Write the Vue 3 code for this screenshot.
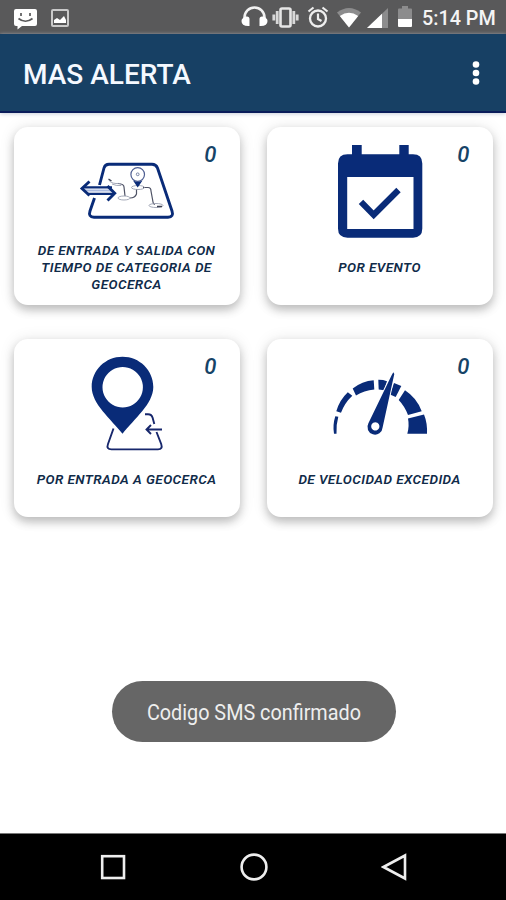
<template>
    <div class="phone">
        <div class="status">
            <div class="status-group">
                <svg class="ic-sms" width="23" height="21" viewBox="0 0 23 21">
                    <path d="M2 0H21Q23 0 23 2V15Q23 17 21 17H8L3.500 20.500V17H2Q0 17 0 15V2Q0 0 2 0Z" fill="#fff"/>
                    <path d="M7 4v3M16 4v3M4.500 9.500Q11.500 15 18.500 9.500" fill="none" stroke="#59595a" stroke-width="1.700"/>
                </svg>
                <svg class="ic-image" width="18" height="18" viewBox="0 0 18 18">
                    <rect x="1" y="1" width="16" height="16" rx="1" fill="none" stroke="#c9c9c9" stroke-width="2"/>
                    <path d="M3 14V11L6 9L9 11L13 7L15 11V14Z" fill="#fff"/>
                </svg>
            </div>
            <div class="status-group">
                <svg class="ic-head" width="27" height="21" viewBox="0 0 27 21">
                    <path d="M3.500 14V11.500A10 10 0 0 1 23.500 11.500V14" fill="none" stroke="#f1f1f1" stroke-width="2.600"/>
                    <path d="M5 10.500Q8.500 10 8.500 13V20Q0.500 20.500 0.500 15Q.5 12 5 10.500ZM22 10.500Q18.500 10 18.500 13V20Q26.500 20.500 26.500 15Q26.500 12 22 10.500Z" fill="#fff"/>
                </svg>
                <svg class="ic-vibrate" width="27" height="21" viewBox="0 0 27 21">
                    <rect x="8.500" y="1.500" width="10" height="18" rx="1.500" fill="none" stroke="#e6e6e6" stroke-width="2.600"/>
                    <path d="M5.200 4V17M21.800 4V17M1.800 7.500V13.500M25.200 7.500V13.500" stroke="#d8d8d8" stroke-width="2.800"/>
                </svg>
                <svg class="ic-alarm" width="22" height="22" viewBox="0 0 22 22">
                    <circle cx="11" cy="12.500" r="8" fill="none" stroke="#eee" stroke-width="2.300"/>
                    <path d="M11 7.500V13L14.500 15M1.500 5.500L6.500 1.500M20.500 5.500L15.500 1.500" fill="none" stroke="#eee" stroke-width="2.200"/>
                </svg>
                <svg class="ic-wifi" width="24" height="20" viewBox="0 0 24 20">
                    <path d="M0 4.500Q12-4.500 24 4.500L12 19.500Z" fill="#8c8c8d"/>
                    <path d="M2.800 8Q12 1.500 21.200 8L12 19.500Z" fill="#fff"/>
                </svg>
                <svg class="ic-signal" width="21" height="20" viewBox="0 0 21 20">
                    <path d="M0 20L21 0V20Z" fill="#8c8c8d"/>
                    <path d="M0 20L15 5.700V20Z" fill="#fff"/>
                </svg>
                <svg class="ic-battery" width="14" height="21" viewBox="0 0 14 21">
                    <path d="M0 3.500Q0 2.500 1 2.500H4V0H10V2.500H13Q14 2.500 14 3.500V13H0Z" fill="#8c8c8d"/>
                    <path d="M0 13H14V20Q14 21 13 21H1Q0 21 0 20Z" fill="#fff"/>
                </svg>
                <span class="clock">5:14 PM</span>
            </div>
        </div>
        <header class="toolbar">
            <h1>MAS ALERTA</h1>
            <svg width="8" height="24" viewBox="0 0 8 24" fill="#fff">
                <circle cx="4" cy="3.500" r="3.300"/>
                <circle cx="4" cy="12" r="3.300"/>
                <circle cx="4" cy="20.500" r="3.300"/>
            </svg>
        </header>
        <main class="content">
            <div class="grid">
                <div class="card" v-for="item in alerts" :key="item.icon">
                    <span class="count">{{ item.count }}</span>
                    <svg class="picture" width="110" height="101" viewBox="0 0 110 101">
                        <g v-if="item.icon === 'fence'" fill="none" stroke="#092b78">
                            <path d="M27.500 45L32 28Q33 24.300 37 24.300H80Q84 24.300 85.500 28L100 71Q102 77 96 77.300H22Q16 77 18 71L22.500 58" stroke-width="2.900"/>
                            <path d="M11 47.400H40M15 53.800H42" stroke-width="2.300"/>
                            <path d="M13 50.500H39" stroke="#a9b8de" stroke-width="2"/>
                            <path d="M17.500 41.500L10 48.500L17.500 55.500M35.500 46L42.700 53.300L35.500 60.500" stroke-width="2.900"/>
                            <path d="M46 43.500Q52 44 52 47L53 56M58 58Q63 58 64.500 54V49M71 47.500H76Q79 47.500 79 51L81 62Q81 64 83 64.500" stroke="#4e5265" stroke-width="1.200"/>
                            <g stroke="#9a9fb0" stroke-width=".9">
                                <path d="M37 40Q38 43 44 43.500Q50 43 49 45.500Q44 46 40 44"/>
                                <ellipse cx="52" cy="58" rx="6" ry="2"/>
                                <ellipse cx="66" cy="47.500" rx="6.500" ry="2"/>
                                <ellipse cx="84" cy="65.500" rx="7" ry="2"/>
                            </g>
                            <path d="M36.500 39L39.500 41M85 66.500H90" stroke="#3c4052" stroke-width="1.300"/>
                            <circle cx="65.700" cy="34.500" r="6.800" fill="#fff" stroke="#4d5d91" stroke-width="1.200"/>
                            <circle cx="65.700" cy="34.300" r="1.400" stroke="#596993" stroke-width=".8"/>
                            <path d="M61 40.500Q65.700 43 70.500 40.500L65.700 47.500Z" fill="#092b78" stroke="none"/>
                        </g>
                        <g v-else-if="item.icon === 'event'" fill="#092b78">
                            <path fill-rule="evenodd" d="M27 5H36.700V14.300H74.300V5H83.700V14.300H88Q97.300 14.300 97.300 23.500V88.500Q97.300 97.700 88 97.700H22.500Q13 97.700 13 88.500V23.500Q13 14.300 22.500 14.300H27ZM22.200 37V89H88.500V37Z"/>
                            <path d="M36 61.800L48.700 74.800L73.500 50" fill="none" stroke="#092b78" stroke-width="6.200"/>
                        </g>
                        <g v-else-if="item.icon === 'entry'">
                            <path d="M73 62.300H76Q79.700 62.300 80.700 66L82.300 72M84.500 80L89.200 92Q91 97.400 86 97.400H39.500Q34 97.400 36 92L41.500 76.500M90 77.500H74.500M79 73L74.500 77.500L79 82" fill="none" stroke="#17276c" stroke-width="1.900"/>
                            <path fill-rule="evenodd" d="M50.500 4.800C33.500 4.800 19.700 18.200 19.700 35C19.700 52 39 67 50.500 81.800C62 67 81.300 52 81.300 35C81.300 18.200 67.500 4.800 50.500 4.800ZM50.700 15A20.200 20.200 0 1 1 50.690 15Z" fill="#092b78"/>
                        </g>
                        <g v-else fill="#092b78">
                            <path v-for="d in gauge" :key="d" :d="d"/>
                            <path fill-rule="evenodd" d="M68.300 20.300L69.300 22L57.600 75.500A7.600 7.600 0 1 1 43.400 71.300L66.500 23.500ZM50.300 70.300A4.100 4.100 0 1 0 50.310 70.300Z" stroke="#fff" stroke-width="2" paint-order="stroke"/>
                        </g>
                    </svg>
                    <p class="label">
                        <span v-for="line in item.lines" :key="line">{{ line }}</span>
                    </p>
                </div>
            </div>
            <div class="toast"><span>Codigo SMS confirmado</span></div>
        </main>
        <nav class="navbar">
            <svg width="28" height="28" viewBox="0 0 28 28"><rect x="3.200" y="3.200" width="21.800" height="21.800"/></svg>
            <svg width="28" height="28" viewBox="0 0 28 28"><circle cx="14" cy="14" r="12.400"/></svg>
            <svg width="28" height="28" viewBox="0 0 28 28"><path d="M2.500 14L24 2.500V25.500Z"/></svg>
        </nav>
    </div>
</template>
<script setup>
    import { ref } from 'vue'
    const alerts = ref([
        { icon: 'fence', count: 0, lines: ['DE ENTRADA Y SALIDA CON', 'TIEMPO DE CATEGORIA DE', 'GEOCERCA'] },
        { icon: 'event', count: 0, lines: ['POR EVENTO'] },
        { icon: 'entry', count: 0, lines: ['POR ENTRADA A GEOCERCA'] },
        { icon: 'speed', count: 0, lines: ['DE VELOCIDAD EXCEDIDA'] }
    ]);
    // dial segments, left to right
    const gauge = [
        'M10.300 64.200L13.300 64.700Q11 73 11.500 81.800H9Q7.500 73 10.300 64.200Z',
        'M11.300 59.200Q14.500 48 22.800 40.200L27.300 43.700Q19.500 51 16 60.800Z',
        'M27.700 36.500Q37 29 48.700 28.200L49.300 37.500Q39 38.500 31 43.500Z',
        'M53.300 27.800Q58 27.700 62 29.200L59 38.200L53.700 37.500Z',
        'M69 31L76.300 34L70.700 45L65 42.500Z',
        'M80 38.200Q92 46 96.700 59.200L83 63Q79.500 54 73.700 48Z',
        'M99 62.500Q102.500 71 102 81.800H82.300Q84.500 74 83 66.500Z'
    ];
</script>
<style>
    body{
        background:#fff;
    }
</style>
<style scoped>
    .phone{
        display:flex;
        flex-direction:column;
        width:506px;
        height:900px;
        overflow:hidden;
        background:#fff;
        font-family:Roboto, "Liberation Sans", sans-serif;
    }
    svg{
        display:block;
        flex:none;
    }
    .status{
        display:flex;
        justify-content:space-between;
        box-sizing:border-box;
        height:34px;
        padding:0 11px 0 14px;
        background:#59595a;
    }
    .status-group{
        display:flex;
        align-items:flex-start;
    }
    .ic-sms{
        margin-top:9px;
    }
    .ic-image{
        margin:9px 0 0 14px;
    }
    .ic-head{
        margin-top:6px;
    }
    .ic-vibrate{
        margin:7px 0 0 4px;
    }
    .ic-alarm{
        margin:6px 0 0 8px;
    }
    .ic-wifi{
        margin:8px 0 0 8px;
    }
    .ic-signal{
        margin:8px 0 0 6px;
    }
    .ic-battery{
        margin:6px 0 0 10px;
    }
    .clock{
        width:73px;
        margin-left:10px;
        color:#f4f4f4;
        font-size:19.800px;
        font-weight:500;
        line-height:37px;
        white-space:nowrap;
    }
    .toolbar{
        display:flex;
        align-items:center;
        justify-content:space-between;
        box-sizing:border-box;
        height:79px;
        padding:0 26px 0 23px;
        border-bottom:2px solid #0a1c5a;
        background:#174064;
        box-shadow:0 1px 4px #c9cedb;
    }
    .toolbar h1{
        margin:5px 0 0;
        color:#f5f9ff;
        font-size:28px;
        font-weight:500;
        line-height:32px;
    }
    .content{
        display:flex;
        flex:1;
        flex-direction:column;
        align-items:center;
        justify-content:space-between;
        padding-bottom:91px;
    }
    .grid{
        display:grid;
        grid-template-columns:226px 226px;
        gap:34px 27px;
        padding-top:14px;
    }
    .card{
        position:relative;
        display:flex;
        flex-direction:column;
        align-items:center;
        box-sizing:border-box;
        height:178px;
        padding-top:13px;
        border-radius:14px;
        background:#fff;
        box-shadow:0 5px 10px rgba(0,0,0,.22), 0 1px 16px rgba(0,0,0,.1);
    }
    .count{
        position:absolute;
        top:14px;
        right:23px;
        color:#164367;
        font-size:22px;
        font-style:italic;
        font-weight:500;
        line-height:28px;
    }
    .label{
        display:flex;
        flex-direction:column;
        justify-content:center;
        height:52px;
        margin:0;
        color:#102b49;
        font-size:13.500px;
        font-style:italic;
        font-weight:600;
        letter-spacing:.44px;
        line-height:17px;
        text-align:center;
        white-space:nowrap;
    }
    .toast{
        display:flex;
        align-items:center;
        justify-content:center;
        box-sizing:border-box;
        width:284px;
        height:61px;
        margin-left:2px;
        padding-top:2px;
        border-radius:31px;
        background:#666;
        color:#eee;
        font-size:22px;
    }
    .toast span{
        transform:scaleX(.9);
        white-space:nowrap;
    }
    .navbar{
        display:flex;
        align-items:center;
        justify-content:center;
        gap:113px;
        box-sizing:border-box;
        height:67px;
        padding-left:2px;
        border-top:1px solid #777;
        background:#000;
    }
    .navbar svg{
        fill:none;
        stroke:#eee;
        stroke-width:2.600;
    }
</style>
